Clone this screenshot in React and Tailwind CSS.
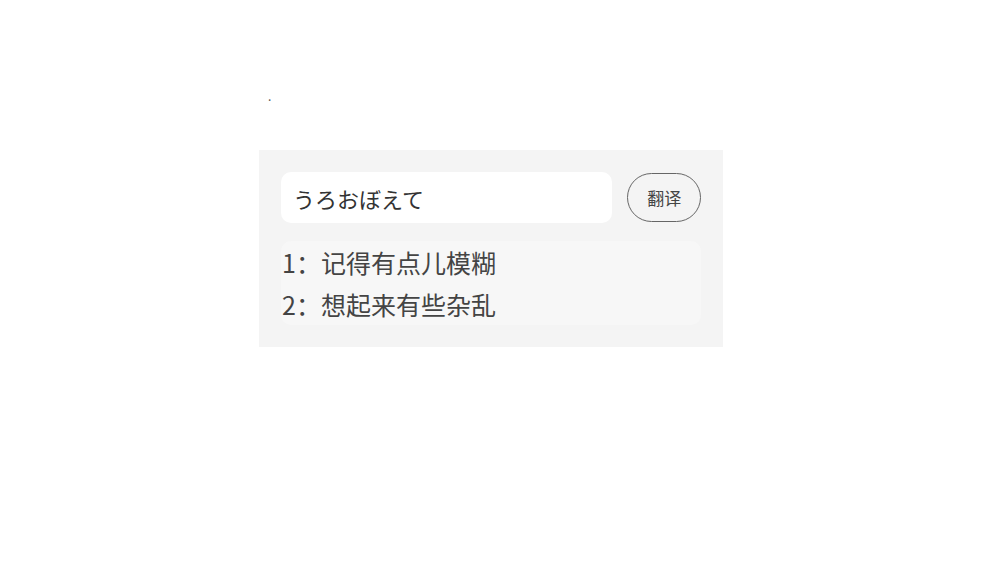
import React from 'react';

const results = ['记得有点儿模糊', '想起来有些杂乱'];

export default function App() {
  const [word, setWord] = React.useState('うろおぼえて');

  return (
    <div
      className="w-[1000px] h-[563px] bg-white"
      style={{ fontFamily: '"Noto Sans CJK SC", "Noto Sans CJK JP", sans-serif' }}
    >
      <div className="pt-[86px] pl-[268px] h-[150px] text-[12px] leading-[20px] text-[#555]">.</div>

      {/* translate panel */}
      <div className="ml-[259px] w-[464px] p-[22px] bg-[#f4f4f4]">
        <div className="flex items-center gap-[15px]">
          <input
            value={word}
            onChange={(e) => setWord(e.target.value)}
            className="w-[333px] h-[51px] px-[12px] rounded-[10px] bg-white text-[22px] text-[#333] outline-none"
          />
          <button className="w-[74px] h-[49px] rounded-full border border-[#666] bg-transparent text-[17px] text-[#444]">
            翻译
          </button>
        </div>

        <div className="mt-[18px] w-[420px] rounded-[10px] bg-[#f7f7f7]">
          {results.map((r, i) => (
            <p key={i} className="h-[42px] leading-[42px] text-[25px] text-[#444] pl-[1px]">
              {i + 1}：{r}
            </p>
          ))}
        </div>
      </div>
    </div>
  );
}
